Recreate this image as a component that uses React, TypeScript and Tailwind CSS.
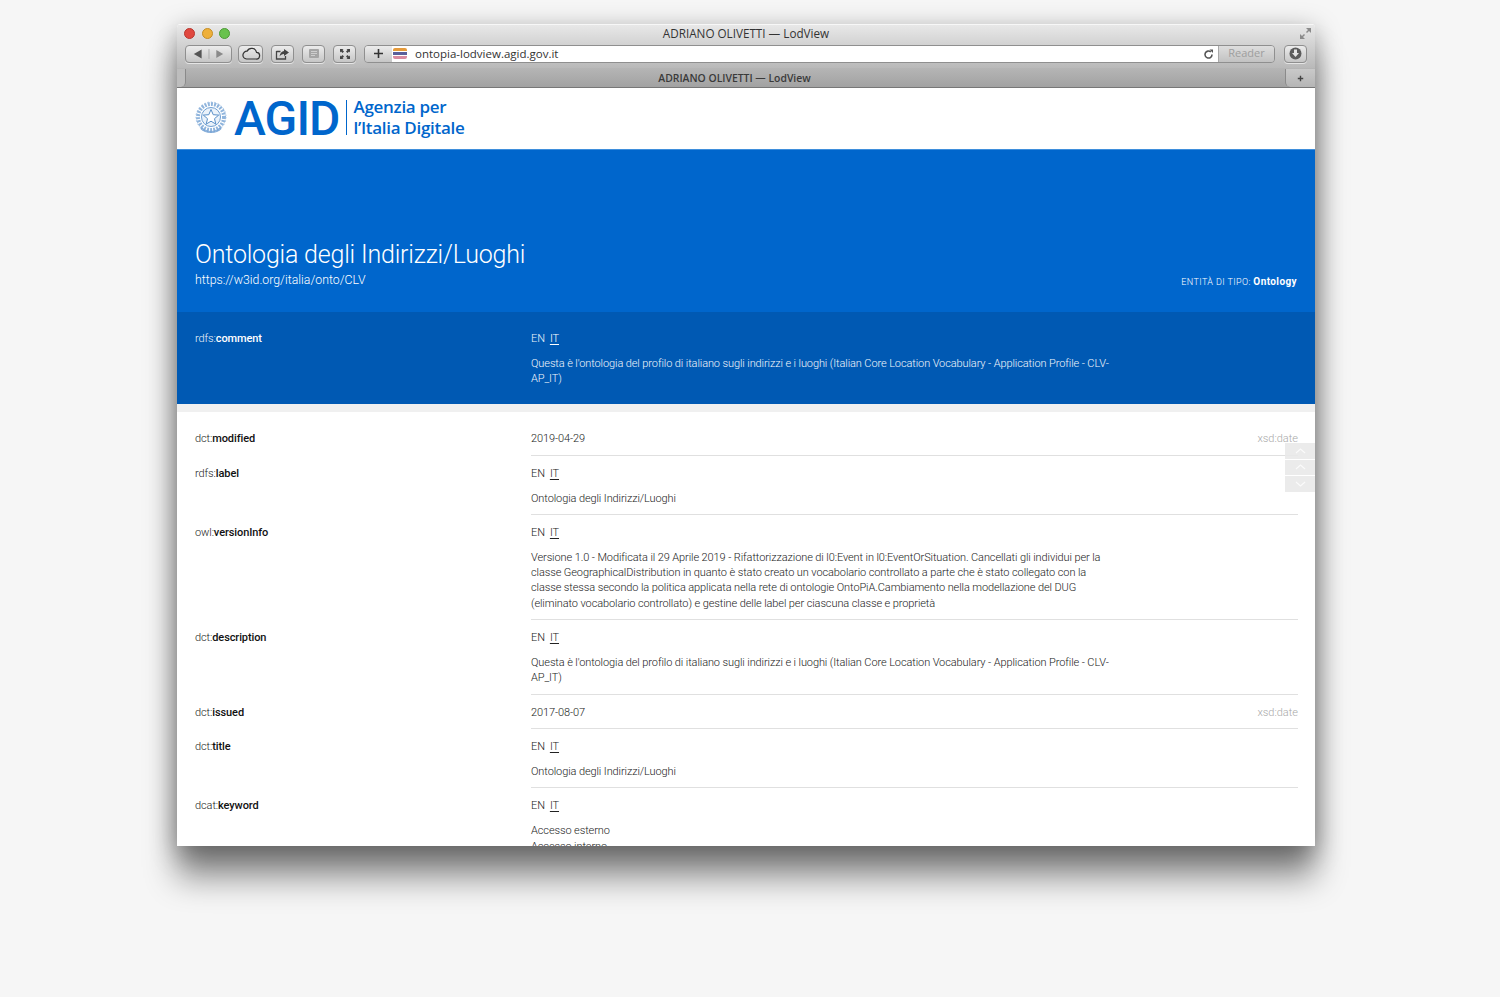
import React from "react";

const btn =
  "h-[18px] rounded-[4px] border border-[#8f8f8f] bg-gradient-to-b from-[#ececec] to-[#c6c6c6] shadow-[0_1px_0_rgba(255,255,255,0.6)] flex items-center justify-center shrink-0";

const LangSwitch = ({ dark }: { dark?: boolean }) => (
  <div className={`flex gap-[5px] h-[15px] leading-[15px] ${dark ? "text-[#eef4fb]" : "text-[#222]"}`}>
    <span>EN</span>
    <span className={`underline underline-offset-2 ${dark ? "text-white" : ""}`}>IT</span>
  </div>
);

const Key = ({ ns, name, dark }: { ns: string; name: string; dark?: boolean }) => (
  <div className={`w-[336px] shrink-0 h-[15px] leading-[15px] tracking-[-0.1px] ${dark ? "text-[#eef4fb]" : "text-[#222]"}`}>
    {ns}:<b className={`font-medium ${dark ? "text-white" : "text-[#111]"}`}>{name}</b>
  </div>
);

const Row = ({
  ns,
  name,
  children,
  type,
  first,
}: {
  ns: string;
  name: string;
  children?: React.ReactNode;
  type?: string;
  first?: boolean;
}) => (
  <div className="pl-[18px] pr-[17px] relative">
    <div className="flex pt-[10px] pb-[9px]">
      <Key ns={ns} name={name} />
      <div className="flex-1 text-[#222] tracking-[-0.1px]">{children}</div>
      {type && <div className="h-[15px] leading-[15px] text-[#a8a8a8]">{type}</div>}
    </div>
    {!first && <div className="absolute top-[-1px] left-[354px] right-[17px] h-px bg-[#e0e0e0]" />}
  </div>
);

const Value = ({ children }: { children: React.ReactNode }) => (
  <div className="mt-[10px] w-[582px] leading-[15.3px]">{children}</div>
);

const Emblem = () => (
  <svg width="32" height="36" viewBox="0 0 32 36" className="shrink-0">
    <circle cx="16" cy="18" r="13" fill="none" stroke="#8fb4dc" strokeWidth="4" strokeDasharray="2 1.2" />
    <circle cx="16" cy="18" r="9.5" fill="#eaf2fa" stroke="#6f9fd2" strokeWidth="1" />
    <path d="M16 10.5l2.2 5.2 5.5.4-4.2 3.6 1.3 5.4-4.8-2.9-4.8 2.9 1.3-5.4-4.2-3.6 5.5-.4z" fill="#fff" stroke="#5a90c8" strokeWidth="1" />
    <path d="M6 29c3 3 6 4 10 4s7-1 10-4" fill="none" stroke="#7ba6d6" strokeWidth="2" />
    <circle cx="16" cy="18" r="15" fill="none" stroke="#a9c6e6" strokeWidth="1" strokeDasharray="1.5 2" />
  </svg>
);

export default function App() {
  return (
    <div className="h-[997px] w-full overflow-hidden bg-[#f6f6f6] pt-[24px] pl-[177px]">
      <div className="w-[1138px] h-[822px] flex flex-col overflow-hidden rounded-t-[4px] bg-white relative shadow-[0_32px_32px_rgba(0,0,0,0.42),0_6px_26px_rgba(0,0,0,0.36)] font-['Roboto',sans-serif] font-light text-[11px]">
        {/* browser chrome */}
        <div className="h-[44px] shrink-0 bg-gradient-to-b from-[#e8e8e8] to-[#b9b9b9] border-t border-[#f7f7f7] relative">
          <div className="flex items-center gap-[6.5px] absolute top-[3px] left-[7px]">
            <span className="w-[11px] h-[11px] rounded-full bg-[#e0483f] border border-[#b8362e]" />
            <span className="w-[11px] h-[11px] rounded-full bg-[#eeb03b] border border-[#c48d25]" />
            <span className="w-[11px] h-[11px] rounded-full bg-[#69c24e] border border-[#4c9a36]" />
          </div>
          <div className="h-[19px] leading-[17px] text-center font-['Open_Sans',sans-serif] font-normal text-[11.7px] text-[#333]">
            ADRIANO OLIVETTI — LodView
          </div>
          <svg width="13" height="13" viewBox="0 0 13 13" className="absolute top-[2px] right-[3px] text-[#8a8a8a]">
            <path d="M7 1h5v5l-2-2-2 2-1-1 2-2zM6 12H1V7l2 2 2-2 1 1-2 2z" fill="currentColor" />
          </svg>
          <div className="flex items-center pl-[8px] h-[19px]">
            <div className={`${btn} w-[47px]`}>
              <svg width="46" height="12" viewBox="0 0 46 12">
                <path d="M8 6l8-4.5v9z" fill="#555" />
                <path d="M23.500 1v10" stroke="#aaa" />
                <path d="M38 6l-7-4v8z" fill="#8a8a8a" />
              </svg>
            </div>
            <div className={`${btn} w-[25px] ml-[6px]`}>
              <svg width="20" height="14" viewBox="0 0 18 12">
                <path d="M5 10.500h8.500a3 3 0 0 0 .5-6 4.500 4.500 0 0 0-8.500-1A3.500 3.500 0 0 0 5 10.500z" fill="none" stroke="#333" strokeWidth="1.100" />
              </svg>
            </div>
            <div className={`${btn} w-[23px] ml-[8px]`}>
              <svg width="15" height="12" viewBox="0 0 15 12">
                <path d="M1.500 3.500h4M1.500 3v8h9V8" fill="none" stroke="#444" strokeWidth="1.300" />
                <path d="M9 1l5 3.500L9 8V6C7 6 5.500 7 4.500 8.500 5 5 7 3.200 9 3z" fill="#444" />
              </svg>
            </div>
            <div className={`${btn} w-[23px] ml-[8px]`}>
              <svg width="12" height="11" viewBox="0 0 12 11">
                <rect x="1" y="1" width="10" height="9" rx="1" fill="#a5a5a5" />
                <path d="M3 3.500h6M3 5.500h6M3 7.500h4" stroke="#d8d8d8" strokeWidth="0.800" />
              </svg>
            </div>
            <div className={`${btn} w-[23px] ml-[8px]`}>
              <svg width="12" height="12" viewBox="0 0 12 12">
                <path d="M1 1h3.500L3.500 2 5 3.500 3.500 5 2 3.500 1 4.500zM11 1v3.500L10 3.500 8.500 5 7 3.500 8.500 2l-1-1zM1 11V7.500L2 8.500 3.500 7 5 8.500 3.500 10l1 1zM11 11H7.500l1-1L7 8.500 8.500 7 10 8.500l1-1z" fill="#444" />
              </svg>
            </div>
            <div className="ml-[8px] w-[911px] h-[18px] flex rounded-[4px] border border-[#8f8f8f] overflow-hidden shrink-0">
              <div className="w-[27px] shrink-0 bg-gradient-to-b from-[#ececec] to-[#c6c6c6] flex items-center justify-center">
                <svg width="11" height="11" viewBox="0 0 11 11">
                  <path d="M5.500 1v9M1 5.500h9" stroke="#333" strokeWidth="1.600" />
                </svg>
              </div>
              <div className="flex-1 bg-white flex items-center relative">
                <div className="w-[14px] h-[12px] ml-[1px] flex flex-col gap-px shrink-0">
                  <span className="h-[3px] rounded-t-[2px] bg-[#e59a3a]" />
                  <span className="h-[3px] bg-[#5a5f9a]" />
                  <span className="h-[3px] rounded-b-[2px] bg-[#d98aa0]" />
                </div>
                <span className="ml-[8px] font-['Open_Sans',sans-serif] font-normal text-[11.5px] text-[#333]">ontopia-lodview.agid.gov.it</span>
                <svg width="11" height="11" viewBox="0 0 11 11" className="absolute right-[4px] top-[3px]">
                  <path d="M9 5.500a3.500 3.500 0 1 1-1.200-2.600" fill="none" stroke="#555" strokeWidth="1.600" />
                  <path d="M6.500 0.500h3.500V4z" fill="#555" />
                </svg>
              </div>
              <div className="w-[56px] shrink-0 bg-gradient-to-b from-[#dedede] to-[#c2c2c2] border-l border-[#a8a8a8] flex items-center justify-center font-['Open_Sans',sans-serif] font-normal text-[11px] text-[#9e9e9e]">
                Reader
              </div>
            </div>
            <div className={`${btn} w-[23px] ml-[9px]`}>
              <svg width="13" height="13" viewBox="0 0 13 13">
                <circle cx="6.500" cy="6.500" r="6" fill="#5c5c5c" />
                <path d="M5 2.500h3v3.500h2L6.500 10 3 6h2z" fill="#e4e4e4" />
              </svg>
            </div>
          </div>
        </div>
        <div className="h-[20px] shrink-0 bg-gradient-to-b from-[#b5b5b5] to-[#a2a2a2] border-b border-[#777] relative text-center pr-[23px] font-['Open_Sans',sans-serif] font-semibold text-[10.4px] leading-[20px] text-[#3a3a3a]">
          ADRIANO OLIVETTI — LodView
          <div className="absolute left-0 bottom-0 w-[9px] h-[18px] bg-[#bdbdbd] border-r border-[#8a8a8a] rounded-br-[5px]" />
          <div className="absolute right-0 bottom-0 w-[30px] h-[18px] bg-gradient-to-b from-[#c9c9c9] to-[#b5b5b5] border-l border-[#8a8a8a] rounded-bl-[5px] flex items-center justify-center">
            <svg width="7" height="7" viewBox="0 0 9 9">
              <path d="M4.500 1v7M1 4.500h7" stroke="#444" strokeWidth="1.800" />
            </svg>
          </div>
        </div>

        {/* header */}
        <div className="h-[61px] shrink-0 flex items-center pl-[18px] pb-[3px] bg-white">
          <Emblem />
          <span className="ml-[7px] mt-[3px] font-['Roboto',sans-serif] font-medium text-[48px] leading-none text-[#0066cc] tracking-[-0.9px]">AGID</span>
          <span className="ml-[6px] w-px h-[35px] bg-[#0066cc]" />
          <div className="ml-[7px] font-['Open_Sans',sans-serif] font-semibold text-[17px] leading-[21px] text-[#0066cc] tracking-[-0.3px]">
            <div>Agenzia per</div>
            <div>l’Italia Digitale</div>
          </div>
        </div>

        {/* title band */}
        <div className="h-[163px] shrink-0 bg-[#0066cc] text-white px-[18px] flex items-end justify-between pb-[22px] border-t border-[#3f8fdc]">
          <div>
            <h1 className="text-[25px] font-light leading-[30px] tracking-[-0.2px]">Ontologia degli Indirizzi/Luoghi</h1>
            <div className="text-[12.3px] font-light leading-[20px]">https://w3id.org/italia/onto/CLV</div>
          </div>
          <div className="text-[9px] font-light tracking-[0.4px] leading-[20px] mb-[-2px]">
            ENTITÀ DI TIPO: <b className="font-bold text-[10px]">Ontology</b>
          </div>
        </div>
        <div className="h-[92px] shrink-0 bg-[#0059b3] text-white pl-[18px] pt-[19px] flex">
          <Key ns="rdfs" name="comment" dark />
          <div className="flex-1 tracking-[-0.1px] text-[#f2f6fc]">
            <LangSwitch dark />
            <Value>
              Questa è l'ontologia del profilo di italiano sugli indirizzi e i luoghi (Italian Core Location Vocabulary - Application Profile - CLV-AP_IT)
            </Value>
          </div>
        </div>
        <div className="h-[8px] shrink-0 bg-[#f0f0f0]" />

        {/* properties */}
        <div className="pt-[9px] flex-1 overflow-hidden">
          <Row ns="dct" name="modified" type="xsd:date" first>
            <div className="h-[15.5px] leading-[15px]">2019-04-29</div>
          </Row>
          <Row ns="rdfs" name="label">
            <LangSwitch />
            <Value>Ontologia degli Indirizzi/Luoghi</Value>
          </Row>
          <Row ns="owl" name="versionInfo">
            <LangSwitch />
            <Value>
              Versione 1.0 - Modificata il 29 Aprile 2019 - Rifattorizzazione di l0:Event in l0:EventOrSituation. Cancellati gli individui per la classe GeographicalDistribution in quanto è stato creato un vocabolario controllato a parte che è stato collegato con la classe stessa secondo la politica applicata nella rete di ontologie OntoPiA.Cambiamento nella modellazione del DUG (eliminato vocabolario controllato) e gestine delle label per ciascuna classe e proprietà
            </Value>
          </Row>
          <Row ns="dct" name="description">
            <LangSwitch />
            <Value>
              Questa è l'ontologia del profilo di italiano sugli indirizzi e i luoghi (Italian Core Location Vocabulary - Application Profile - CLV-AP_IT)
            </Value>
          </Row>
          <Row ns="dct" name="issued" type="xsd:date">
            <div className="h-[15.5px] leading-[15px]">2017-08-07</div>
          </Row>
          <Row ns="dct" name="title">
            <LangSwitch />
            <Value>Ontologia degli Indirizzi/Luoghi</Value>
          </Row>
          <Row ns="dcat" name="keyword">
            <LangSwitch />
            <Value>
              Accesso esterno
              <br />
              Accesso interno
            </Value>
          </Row>
        </div>

        {/* scroll buttons */}
        <div className="absolute top-[419px] right-0 w-[30px] flex flex-col gap-px">
          {[0, 1, 2].map((i) => (
            <div key={i} className="h-[15.500px] bg-[#e9e9e9]/90 flex items-center justify-center">
              <svg width="11" height="6" viewBox="0 0 11 6">
                <path d={i === 2 ? "M1 1l4.500 4L10 1" : "M1 5l4.500-4L10 5"} fill="none" stroke="#fafafa" strokeWidth="1.200" />
              </svg>
            </div>
          ))}
        </div>
      </div>
    </div>
  );
}
